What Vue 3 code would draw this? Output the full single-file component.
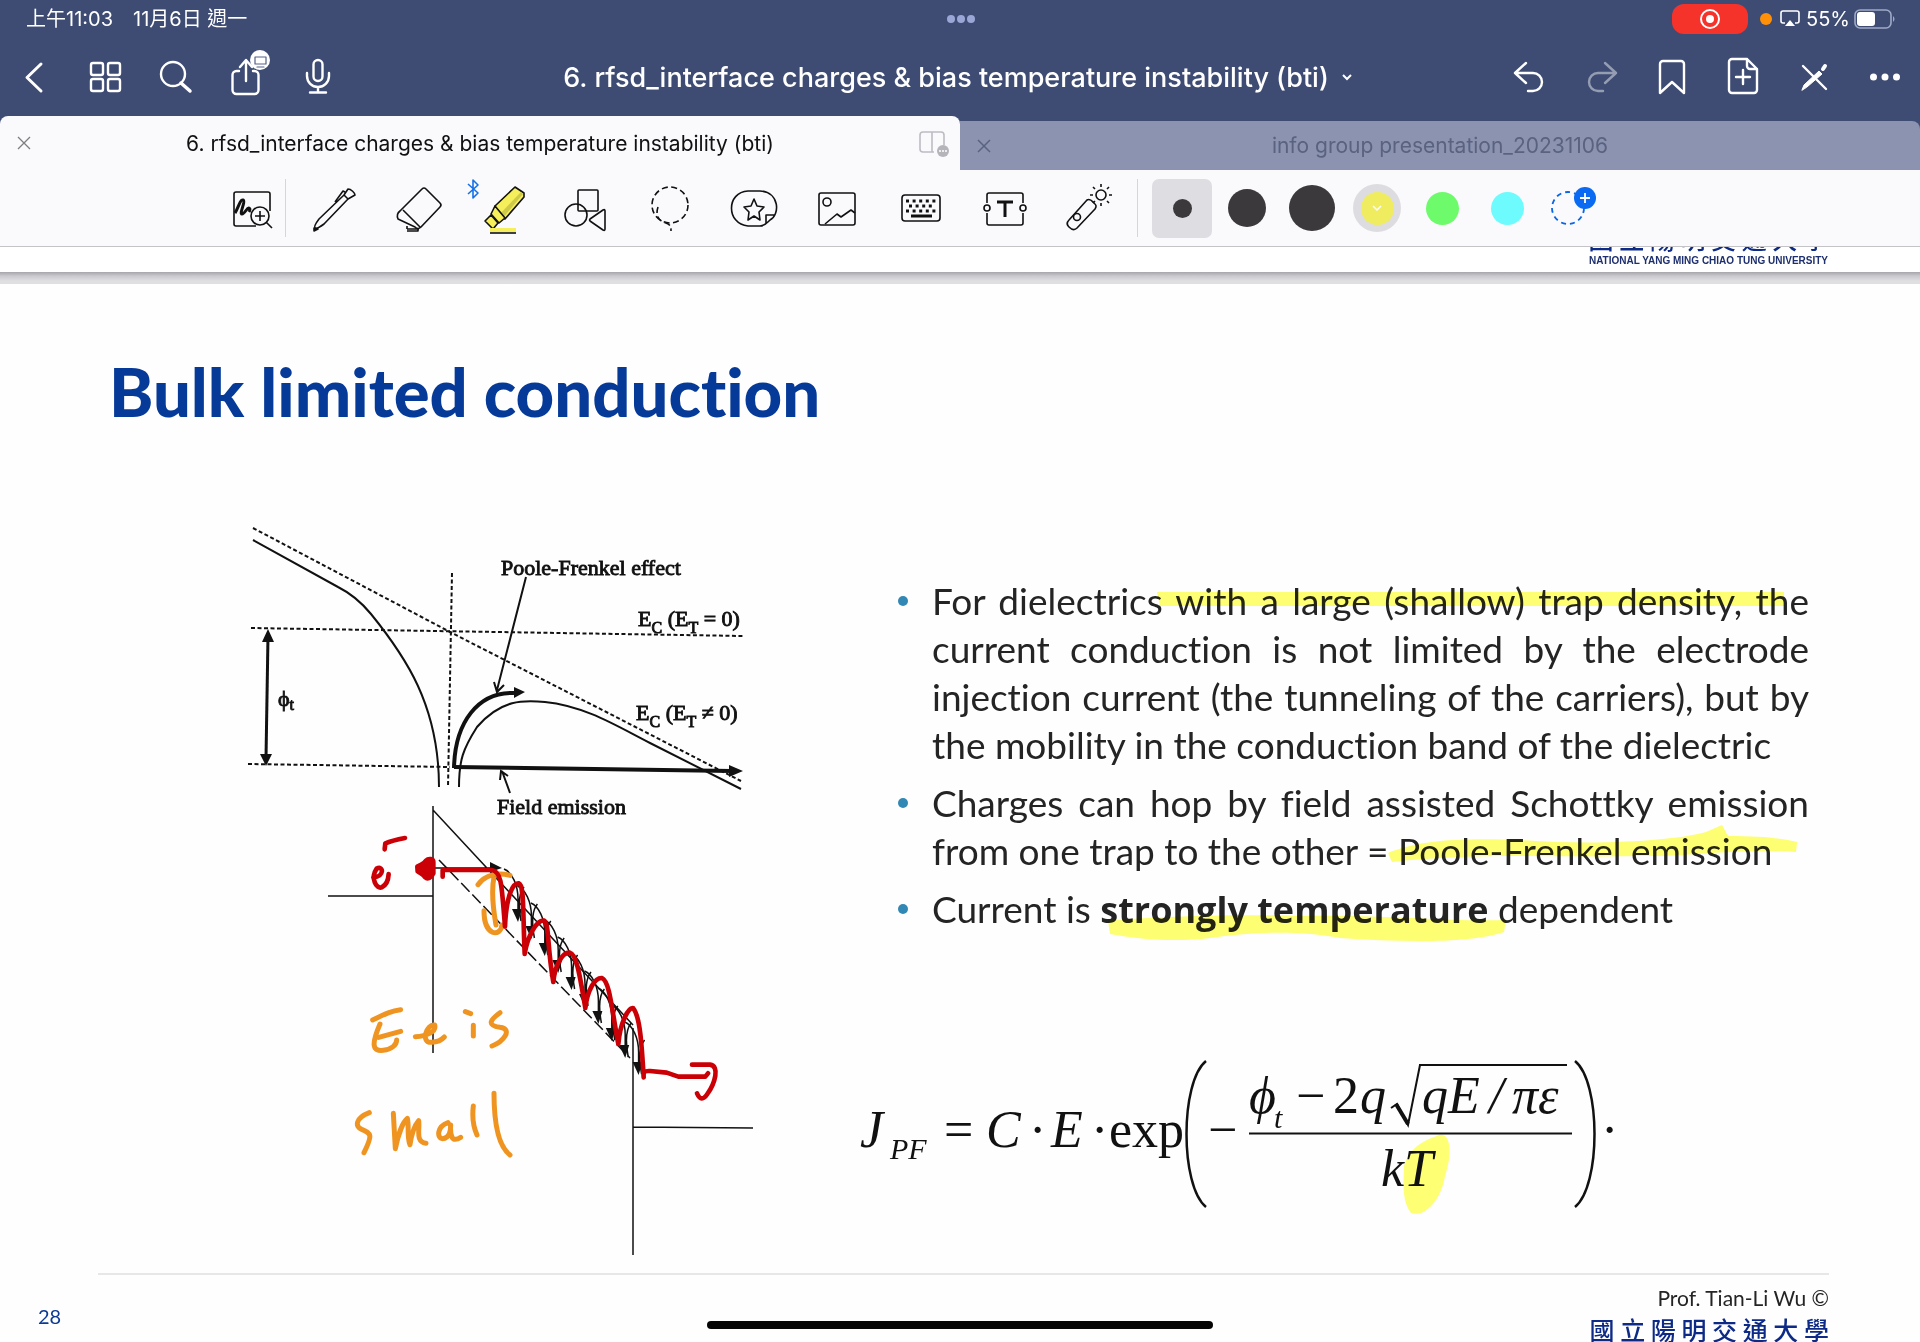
<script setup>
const hops = Array.from({ length: 10 }, (_, i) => {
  const x = 504 + i * 13.4
  const y = 869 + i * 17
  return {
    arc: `M${x} ${y}C${x + 8} ${y + 3} ${x + 14} ${y + 16} ${x + 14} ${y + 30}V${y + 46}M${x + 17} ${y + 52}C${x + 14} ${y + 36} ${x + 15} ${y + 24} ${x + 20} ${y + 18}`,
    head: `M${x + 8} ${y + 40}h10l-4 13z`,
  }
})
</script>

<template>
  <div class="app">
    <header class="chrome">
      <div class="status">
        <div class="when"><span>上午11:03</span><span>11月6日 週一</span></div>
        <svg class="multitask" width="28" height="10" viewBox="0 0 28 10" fill="#9aa7d6"><circle cx="4" cy="5" r="4" /><circle cx="14" cy="5" r="4" /><circle cx="24" cy="5" r="4" /></svg>
        <div class="indicators">
          <span class="record">
            <svg width="22" height="22" viewBox="0 0 22 22" fill="none" stroke="#fff" stroke-width="2"><circle cx="11" cy="11" r="9" /><circle cx="11" cy="11" r="4" fill="#fff" stroke="none" /></svg>
          </span>
          <span class="mic-dot"></span>
          <svg class="airplay" width="20" height="18" viewBox="0 0 20 18" fill="none" stroke="#fff" stroke-width="1.6"><path d="M5 13H3a2 2 0 0 1-2-2V3a2 2 0 0 1 2-2h14a2 2 0 0 1 2 2v8a2 2 0 0 1-2 2h-2" /><path d="M10 10l5 6H5z" fill="#fff" stroke="none" /></svg>
          <span class="percent">55%</span>
          <svg width="42" height="20" viewBox="0 0 42 20"><rect x="1" y="1" width="36" height="18" rx="5" fill="none" stroke="#a0a9c6" stroke-width="1.6" /><rect x="3" y="3" width="18" height="14" rx="3" fill="#fff" /><path d="M39 7q3 3 0 6z" fill="#a0a9c6" /></svg>
        </div>
      </div>
      <nav class="navbar">
        <div class="nav-group left">
          <button class="nav-btn" aria-label="Back"><svg viewBox="0 0 48 48"><path d="M32 11 18 24.500l14 13.500" stroke-width="3" /></svg></button>
          <button class="nav-btn" aria-label="Thumbnails"><svg viewBox="0 0 48 48"><rect x="11" y="10" width="12" height="12" rx="2" /><rect x="28" y="10" width="12" height="12" rx="2" /><rect x="11" y="26" width="12" height="12" rx="2" /><rect x="28" y="26" width="12" height="12" rx="2" /></svg></button>
          <button class="nav-btn" aria-label="Search"><svg viewBox="0 0 48 48"><circle cx="22" cy="21" r="12" /><path d="m30 30 9 8" stroke-width="3.500" /></svg></button>
          <button class="nav-btn" aria-label="Share"><svg viewBox="0 0 48 48"><path d="M17 18h-2.500a4 4 0 0 0-4 4v15a4 4 0 0 0 4 4h18a4 4 0 0 0 4-4V22a4 4 0 0 0-4-4H31M24 28V8M18 14l6-7 6 7" /><circle cx="38" cy="7" r="10" fill="#fff" stroke="none" /><path d="M33 4h11v7H33zM35 14h7" stroke="#56608a" stroke-width="1.200" /></svg></button>
          <button class="nav-btn" aria-label="Record audio"><svg viewBox="0 0 48 48"><rect x="20.500" y="7" width="9" height="21" rx="4.500" /><path d="M14 20v3a11 11 0 0 0 22 0v-3M25 34v5M17 39.500h16" /></svg></button>
        </div>
        <button class="doc-title">6. rfsd_interface charges &amp; bias temperature instability (bti)<svg width="12" height="8" viewBox="0 0 12 8"><path d="m2 2 4 4 4-4" fill="none" stroke="#fff" stroke-width="2" /></svg></button>
        <div class="nav-group right">
          <button class="nav-btn" aria-label="Undo"><svg viewBox="0 0 48 48"><path d="M20 10 9 20l11 10M9 20h18a9 9 0 0 1 0 18h-5" /></svg></button>
          <button class="nav-btn dim" aria-label="Redo"><svg viewBox="0 0 48 48"><path d="m28 10 11 10-11 10M39 20H21a9 9 0 0 0 0 18h5" /></svg></button>
          <button class="nav-btn" aria-label="Bookmark"><svg viewBox="0 0 48 48"><path d="M12 11a3 3 0 0 1 3-3h18a3 3 0 0 1 3 3v29l-12-11-12 11z" /></svg></button>
          <button class="nav-btn" aria-label="Add page"><svg viewBox="0 0 48 48"><path d="M13 6h15l10 10v21a3 3 0 0 1-3 3H13a3 3 0 0 1-3-3V9a3 3 0 0 1 3-3zM28 6v7a3 3 0 0 0 3 3h7M24 17v14M17 24h14" /></svg></button>
          <button class="nav-btn" aria-label="Stop editing"><svg viewBox="0 0 48 48"><path d="m13 13 23 23" /><path d="m12 37 2-5 15-14 3 3-15 13z" fill="#fff" stroke-width="1" /><path d="m33 16 2-3" stroke-width="4" /></svg></button>
          <button class="nav-btn" aria-label="More"><svg viewBox="0 0 48 48"><g fill="#fff" stroke="none"><circle cx="12.500" cy="24" r="3.500" /><circle cx="24" cy="24" r="3.500" /><circle cx="35.500" cy="24" r="3.500" /></g></svg></button>
        </div>
      </nav>
      <div class="tabs">
        <div class="tab active">
          <button class="close" aria-label="Close tab"><svg width="14" height="14" viewBox="0 0 14 14"><path d="m1 1 12 12M13 1 1 13" stroke="#7d7d82" stroke-width="1.300" /></svg></button>
          <a class="tab-name" href="#">6. rfsd_interface charges &amp; bias temperature instability (bti)</a>
          <svg class="split" width="32" height="28" viewBox="0 0 32 28" fill="none" stroke="#bcbcc2" stroke-width="1.600"><path d="M16 22H5a3 3 0 0 1-3-3V5a3 3 0 0 1 3-3h18a3 3 0 0 1 3 3v10M14 2v20" /><circle cx="25" cy="21" r="6" fill="#b4b4ba" stroke="none" /><path d="M21 21h2m1 0h2m1 0h2" stroke="#fff" /></svg>
        </div>
        <div class="tab idle">
          <button class="close" aria-label="Close tab"><svg width="14" height="14" viewBox="0 0 14 14"><path d="m1 1 12 12M13 1 1 13" stroke="#59627f" stroke-width="1.500" /></svg></button>
          <a class="tab-name" href="#">info group presentation_20231106</a>
        </div>
      </div>
    </header>

    <div class="toolbar">
      <div class="tools">
        <button class="tool" aria-label="Zoom window"><svg viewBox="0 0 52 52"><path d="M44 29V12a2 2 0 0 0-2-2H10a2 2 0 0 0-2 2v30a2 2 0 0 0 2 2h20" /><path d="M9 31c3-4 5-14 8-13s-4 14-1 14 5-7 7-6 0 4 0 4" stroke-width="3" /><circle cx="34" cy="34" r="9" fill="#faf9fc" /><path d="M34 29v10M29 34h10M40 40l6 6" /></svg></button>
        <button class="tool" aria-label="Pen"><svg viewBox="0 0 52 52"><path d="M35 13 10 37c-3 4-5 8-4 9s5-1 9-4l24-25M35 13l4 4M35 13l4-6c3 0 7 4 7 6l-7 4M36 10l-2-1-8 11" /><path d="m5 46 4 1-4 2z" fill="#111" /></svg></button>
        <button class="tool" aria-label="Eraser"><svg viewBox="0 0 52 52"><path d="M29 7q2-2 4 0l14 14q2 2 0 4L28 45q-3 3-6 0L5 37q-2-5 2-8zM10 28l17 17M14 47h12M14 44v3M25 46v3H14" /></svg></button>
        <button class="tool highlighter" aria-label="Highlighter">
          <svg viewBox="0 0 52 52"><path d="m38 5 9 6v4L28 37l-12-3 2-10z" fill="#f4ef5a" /><path d="M46 12 26 36l-6-1 24-25z" fill="#cfc94a" stroke="none" /><path d="m18 24-4 8 8 9 6-5-10-12zM8 39l6-6 7 8-5 6z" fill="#f4ef5a" /><path d="M13 48h26" stroke="#f4ef5a" stroke-width="4" /><path d="M13 51h26" /></svg>
          <svg class="bluetooth" width="12" height="22" viewBox="0 0 12 22" fill="none" stroke="#1471e6" stroke-width="1.800"><path d="m1 6 10 9-5 5V2l5 5-10 9" /></svg>
        </button>
        <button class="tool" aria-label="Shapes"><svg viewBox="0 0 52 52"><rect x="18" y="8" width="20" height="21" rx="1" /><circle cx="16" cy="33" r="11" /><path d="M30 39q-1-1 0-2l13-9q2-1 2 1v18q0 2-2 1z" /></svg></button>
        <button class="tool" aria-label="Lasso"><svg viewBox="0 0 52 52"><g stroke-dasharray="6 3.500"><circle cx="26" cy="23" r="18" /><path d="M14 25c-3 9 1 14 8 16 5 2 5 4 5 8" /></g></svg></button>
        <button class="tool" aria-label="Stickers"><svg viewBox="0 0 52 52"><path d="M20 9h12c20 1 20 24 10 29-3 3-5 6-10 6H20C-2 42-2 10 20 9zM38 42v-9h9" /><path d="m26 17 3 7 7 1-5 5 1 8-6-4-6 4 1-8-5-5 7-1z" /></svg></button>
        <button class="tool" aria-label="Image"><svg viewBox="0 0 52 52"><rect x="8" y="11" width="36" height="32" rx="2" /><circle cx="16" cy="20" r="4" /><path d="m14 42 12-10 4 3 10-7 4 3" /></svg></button>
        <button class="tool" aria-label="Keyboard"><svg viewBox="0 0 52 52"><rect x="7" y="13" width="38" height="26" rx="3" /><path d="M11 19h30M11 29h30" stroke-width="3" stroke-dasharray="3 3.600" /><path d="M14 24h25" stroke-width="3" stroke-dasharray="3 3.600" /><path d="M16 34h21" stroke-width="3" /></svg></button>
        <button class="tool" aria-label="Text"><svg viewBox="0 0 52 52"><path d="M8 21v-8a2 2 0 0 1 2-2h32a2 2 0 0 1 2 2v8M8 31v10a2 2 0 0 0 2 2h32a2 2 0 0 0 2-2V31" /><circle cx="8" cy="26" r="3" /><circle cx="44" cy="26" r="3" /><path d="M18 20h16M26 19v16" stroke-width="3" /></svg></button>
        <button class="tool" aria-label="Laser pointer"><svg viewBox="0 0 52 52"><path d="m25 18-18 20c-3 3-2 5 0 7s5 4 8 1l18-19c2-3 1-4-1-6s-4-5-7-3z" /><circle cx="15" cy="35" r="3.500" /><circle cx="39" cy="13" r="5" /><path d="M39 5V2M39 24v-3M31 13h-3M50 13h-3M33 7l-2-2M45 19l2 2M45 7l2-2M33 19l-2 2" /></svg></button>
      </div>
      <div class="options">
        <button class="size chosen" aria-label="Thin"><span class="dot thin"></span></button>
        <button class="size" aria-label="Medium"><span class="dot medium"></span></button>
        <button class="size" aria-label="Thick"><span class="dot thick"></span></button>
        <button class="size" aria-label="Yellow"><span class="ring"><span class="dot yellow"><svg width="12" height="8" viewBox="0 0 12 8"><path d="m2 2 4 4 4-4" fill="none" stroke="#fff" stroke-width="1.500" /></svg></span></span></button>
        <button class="size" aria-label="Green"><span class="dot green"></span></button>
        <button class="size" aria-label="Cyan"><span class="dot cyan"></span></button>
        <button class="size" aria-label="Add colour"><svg width="52" height="52" viewBox="0 0 52 52" fill="none" stroke="#0a66e8" stroke-width="1.800"><circle cx="22" cy="26" r="16" stroke-dasharray="5 4" /><circle cx="39" cy="16" r="11" fill="#0a6af2" stroke="none" /><path d="M39 11v10M34 16h10" stroke="#fff" /></svg></button>
      </div>
    </div>

    <section class="prev-page">
      <p class="uni">國 立 陽 明 交 通 大 學</p>
      <p class="uni-en">NATIONAL YANG MING CHIAO TUNG UNIVERSITY</p>
    </section>
    <div class="page-gap"></div>

    <main class="slide">
      <h1>Bulk limited conduction</h1>
      <div class="columns">
        <svg class="figure" width="540" height="750" viewBox="240 510 540 750" fill="none" stroke="#111" stroke-width="2">
          <g stroke-dasharray="4 2.500">
            <path d="M253 528 450 632 741 781" />
            <path d="M251 628 743 636" />
            <path d="M248 764 450 767" />
            <path d="M452 573 448 787" />
          </g>
          <path d="M253 540 338 587C352 594 362 603 371 614 405 656 439 705 439 787" />
          <path d="M459 787C459 760 463 749 477 727 501 699 524 700 545 702 586 706 620 728 650 743L741 789" />
          <path d="M454 768C455 722 478 692 514 693" stroke-width="4" />
          <path d="M454 767 732 771" stroke-width="4" />
          <path d="M268 636 266 758" stroke-width="3" />
          <path d="m514 687 11 5-11 6zM729 765l14 6-14 6zM262 642l6-13 6 13zM260 754l6 12 6-12z" fill="#111" stroke="none" />
          <path d="M526 577 497 690M494 682l3 10 7-7M510 793 502 771M500 780l1-9 7 5" />
          <g class="fig-text">
            <text x="501" y="575">Poole-Frenkel effect</text>
            <text x="638" y="626">E<tspan class="sub" dy="7">C</tspan><tspan dy="-7"> (E</tspan><tspan class="sub" dy="7">T</tspan><tspan dy="-7"> = 0)</tspan></text>
            <text x="636" y="720">E<tspan class="sub" dy="7">C</tspan><tspan dy="-7"> (E</tspan><tspan class="sub" dy="7">T</tspan><tspan dy="-7"> ≠ 0)</tspan></text>
            <text x="278" y="706">ϕ<tspan class="sub" dy="4">t</tspan></text>
            <text x="497" y="814">Field emission</text>
          </g>
          <g stroke-width="1.500">
            <path d="M433 806V1053M328 896H433M433 810 633 1025M433 868H496M633 1028V1255M633 1127 753 1128" />
            <path d="M439 860 630 1058" stroke-dasharray="12 4" />
            <path v-for="(hop, i) in hops" :key="'a' + i" :d="hop.arc" />
          </g>
          <g fill="#111" stroke="none">
            <path v-for="(hop, i) in hops" :key="'h' + i" :d="hop.head" />
            <path d="m490 862 12 6-12 4z" />
          </g>
          <svg x="300" y="790" width="480" height="480" viewBox="0 0 1440 1440" stroke-linecap="round" stroke-linejoin="round">
            <g stroke="#ef9420" stroke-width="15">
              <path d="M534 284C555 255 590 246 630 256M582 260C574 300 580 360 588 405M552 362C552 440 602 442 606 405" />
              <path d="M302 659C275 662 255 672 218 690M240 702C215 760 215 785 250 781 275 778 290 765 290 750M236 742 302 724" />
              <path d="M346 740C380 738 410 725 404 705 380 700 360 760 395 757 415 756 425 750 433 741M496 665l16 6M520 706v32M600 668C570 690 560 705 600 712 640 718 610 755 576 768" />
              <path d="M208 968C165 985 165 1010 185 1018 215 1030 218 1035 192 1088M280 970 286 1076C295 1030 310 995 322 985 328 1010 320 1040 330 1064 335 1030 345 1005 356 992 360 1020 345 1055 378 1060M444 998C410 1010 410 1045 428 1046 450 1046 452 1015 452 1005 450 1035 455 1060 482 1042M520 948C516 980 520 1010 531 1035M582 910C582 980 590 1065 630 1095" />
            </g>
            <g stroke="#cb0006" stroke-width="14">
              <path d="M254 178 256 160C275 152 295 148 315 144M220 262C255 260 250 225 230 236 210 265 230 298 245 292 260 285 265 270 266 252" />
              <path d="M352 230C362 222 372 224 378 212 386 204 400 206 400 216V250C394 264 382 268 376 262 368 250 360 250 353 244z" fill="#cb0006" />
              <path d="M428 260v-20H575C605 244 605 285 615 410 618 330 635 278 656 280 672 285 668 340 674 492 682 440 710 388 732 392 748 400 740 460 760 576 764 530 785 486 810 488 830 492 840 560 856 654 862 600 885 562 906 564 930 575 935 660 955 762 960 700 985 650 1000 655 1020 680 1025 760 1031 862 1030 845 1032 842 1050 843L1100 848 1135 860H1216L1224 850" />
              <path d="M1176 824H1230C1260 828 1245 880 1222 912 1210 930 1200 930 1191 910" />
            </g>
          </svg>
        </svg>

        <div class="notes">
          <ul>
            <li>
              <span class="line full">For dielectrics with a large (shallow) trap density, the</span>
              <span class="line full">current conduction is not limited by the electrode</span>
              <span class="line full">injection current (the tunneling of the carriers), but by</span>
              <span class="line">the mobility in the conduction band of the dielectric</span>
            </li>
            <li>
              <span class="line full">Charges can hop by field assisted Schottky emission</span>
              <span class="line">from one trap to the other = Poole-Frenkel emission</span>
            </li>
            <li><span class="line">Current is <strong>strongly temperature</strong> dependent</span></li>
          </ul>
          <svg class="marker" width="930" height="380" viewBox="890 579 930 380" fill="#feff72" aria-hidden="true">
            <path d="M1157 592H1784V606H1160z" />
            <path d="M1388 853C1420 840 1460 838 1520 840 1600 846 1680 840 1706 832L1722 825 1728 836C1760 836 1780 838 1797 842L1796 852C1740 848 1700 856 1640 856 1560 858 1480 852 1392 862z" />
            <path d="M1108 921C1160 916 1240 914 1300 916 1380 914 1450 922 1506 920L1504 932C1470 944 1400 942 1340 938 1300 930 1250 932 1210 938 1180 942 1140 940 1110 934z" />
          </svg>
          <svg class="formula" width="780" height="170" viewBox="850 1050 780 170" fill="none" stroke="#111" stroke-width="2">
            <path d="M1438 1135C1452 1132 1450 1160 1444 1176 1440 1200 1424 1218 1410 1213 1400 1200 1403 1180 1403 1166 1410 1145 1425 1140 1438 1135z" fill="#feff72" stroke="none" />
            <g class="math">
              <text x="859" y="1147">J</text><text class="small" x="889" y="1159">PF</text>
              <text class="up" x="943" y="1147">=</text><text x="985" y="1147">C</text>
              <text class="up" x="1028" y="1147">·</text><text x="1050" y="1147">E</text><text class="up" x="1090" y="1147">·</text>
              <text class="up" x="1108" y="1147">exp</text><text class="up" x="1207" y="1147">−</text>
              <text x="1248" y="1113">ϕ</text><text class="small" x="1273" y="1128">t</text><text class="up" x="1295" y="1113">−</text>
              <text class="up" x="1332" y="1113">2</text><text x="1359" y="1113">q</text>
              <text x="1421" y="1113">q</text><text x="1447" y="1113">E</text><text x="1488" y="1113">/</text><text x="1511" y="1113">πε</text>
              <text x="1380" y="1186">k</text><text x="1403" y="1186">T</text>
              <text class="up" x="1600" y="1147">·</text>
            </g>
            <path d="M1248 1133.500H1571M1418 1065H1566" />
            <path d="m1390 1108 6-4 11 21 12-60" />
            <path d="m1395 1104 12 20" stroke-width="4" />
            <path d="M1205 1061C1179 1082 1179 1186 1205 1207M1574 1061C1600 1082 1600 1186 1574 1207" stroke-width="2.500" />
          </svg>
        </div>
      </div>
      <footer>
        <span class="page-no">28</span>
        <div class="credit"><span>Prof. Tian-Li Wu ©</span><span class="uni">國 立 陽 明 交 通 大 學</span></div>
      </footer>
    </main>
    <div class="home-bar"></div>
  </div>
</template>

<style>
body { margin: 0; background: #fefefe; }
</style>

<style scoped>
.app { position: relative; min-height: 100vh; max-height: 100vh; overflow: hidden; display: flex; flex-direction: column; font-family: Inter, "Noto Sans CJK TC", sans-serif; background: #fefefe; color: #111; }
button { border: 0; background: none; padding: 0; margin: 0; font: inherit; color: inherit; display: flex; align-items: center; justify-content: center; }
a { color: inherit; text-decoration: none; }
p, ul, h1 { margin: 0; padding: 0; }

.chrome { background: #3e4c74; color: #fff; flex: none; }
.status { height: 38px; display: grid; grid-template-columns: 1fr auto 1fr; align-items: center; padding: 0 24px 0 26px; font-size: 20px; line-height: 24px; }
.when { display: flex; gap: 20px; white-space: nowrap; }
.indicators { display: flex; align-items: center; justify-content: flex-end; }
.record { width: 76px; height: 30px; border-radius: 12px; background: #f6332b; display: flex; align-items: center; justify-content: center; margin-right: 12px; }
.mic-dot { width: 12px; height: 12px; border-radius: 50%; background: #ff9008; margin-right: 8px; }
.airplay { margin-right: 6px; }
.percent { margin-right: 4px; }

.navbar { height: 78px; display: grid; grid-template-columns: 1fr auto 1fr; align-items: center; }
.nav-group { display: flex; gap: 23px; }
.nav-group.left { padding-left: 9px; }
.nav-group.right { justify-content: flex-end; padding-right: 11px; }
.nav-btn { width: 48px; height: 48px; }
.nav-btn svg { width: 48px; height: 48px; fill: none; stroke: #fff; stroke-width: 2.4; stroke-linecap: round; stroke-linejoin: round; overflow: visible; }
.nav-btn.dim { opacity: .45; }
.doc-title { font-size: 27px; font-weight: 500; gap: 12px; white-space: nowrap; padding-right: 4px; }

.tabs { display: flex; align-items: flex-end; }
.tab { flex: 1; display: flex; align-items: center; justify-content: center; font-size: 21px; position: relative; }
.tab.active { height: 54px; background: #faf9fc; color: #111; border-radius: 8px 8px 0 0; }
.tab.idle { height: 49px; background: #8b93b1; color: #59627f; border-radius: 0 8px 0 0; }
.close { position: absolute; left: 17px; top: 0; bottom: 0; }
.split { position: absolute; right: 10px; top: 14px; }

.toolbar { height: 76px; flex: none; display: flex; align-items: center; background: #faf9fc; border-bottom: 1px solid #c4c4c8; padding-left: 210px; }
.tools { width: 920px; display: flex; position: relative; }
.tool { flex: 1; height: 58px; position: relative; }
.tool:first-child::after { content: ""; position: absolute; right: 8px; top: 0; width: 1px; height: 58px; background: #d5d5da; }
.tool svg { width: 52px; height: 52px; fill: none; stroke: #111; stroke-width: 1.6; stroke-linejoin: round; overflow: visible; }
.tool .bluetooth { position: absolute; left: 6px; top: -1px; width: 12px; height: 22px; stroke: #1471e6; }
.options { display: flex; align-items: center; gap: 5px; margin-left: 7px; padding-left: 14px; border-left: 1px solid #d5d5da; height: 58px; }
.size { width: 60px; height: 59px; border-radius: 7px; }
.size.chosen { background: #dedde1; }
.dot { border-radius: 50%; background: #3b393c; display: flex; align-items: center; justify-content: center; }
.thin { width: 19px; height: 19px; }
.medium { width: 38px; height: 38px; }
.thick { width: 46px; height: 46px; }
.ring { width: 48px; height: 48px; border-radius: 50%; background: #dddce0; display: flex; align-items: center; justify-content: center; }
.yellow { width: 33px; height: 33px; background: #efec60; }
.green { width: 33px; height: 33px; background: #6dfb6b; }
.cyan { width: 33px; height: 33px; background: #6dfbfd; }

.prev-page { height: 25px; display: flex; flex-direction: column; justify-content: flex-end; align-items: flex-end; padding-right: 92px; overflow: hidden; background: #fff; flex: none; }
.page-gap { height: 12px; flex: none; background: linear-gradient(#a6a6aa, #cac9cd 4px, #dfdee1 9px); }
.uni { font-family: "Noto Sans CJK TC", sans-serif; font-weight: 500; font-size: 25px; line-height: 26px; color: #0d2a86; white-space: nowrap; }
.uni-en { font-family: "Liberation Sans", sans-serif; font-weight: 700; font-size: 10px; line-height: 20px; margin-bottom: 1px; color: #1d2f6e; }

.slide { flex: 1; display: flex; flex-direction: column; font-family: Lato, "Noto Sans CJK TC", sans-serif; font-variant-ligatures: none; color: #242424; }
h1 { font-size: 67px; line-height: 76px; font-weight: 900; color: #063a98; padding: 69px 0 0 109px; }
.columns { display: flex; justify-content: space-between; padding: 81px 111px 0 240px; }
.figure { flex: none; }
.fig-text { font: 22px "Liberation Serif", serif; fill: #111; stroke: #111; stroke-width: .9px; }
.sub { font-size: 16px; }
.notes { position: relative; flex: none; width: 958px; padding-top: 67px; }
ul { list-style: none; font-size: 37px; line-height: 48px; }
li { position: relative; padding-left: 81px; margin-bottom: 10px; }
li::before { content: ""; position: absolute; left: 47px; top: 19px; width: 10px; height: 10px; border-radius: 50%; background: #3288b4; }
.line { display: block; white-space: nowrap; }
.line.full { white-space: normal; text-align-last: justify; }
strong { font-family: "Open Sans", sans-serif; font-size: 36px; line-height: 24px; font-weight: 700; }
.marker { position: absolute; left: 39px; top: 69px; mix-blend-mode: multiply; }
.formula { display: block; margin-top: 117px; }
.math { font: italic 52px "Liberation Serif", serif; fill: #111; stroke: none; }
.up { font-style: normal; }
.small { font-size: 30px; }

footer { flex: none; display: flex; justify-content: space-between; margin: 13px 91px 0 98px; border-top: 2px solid #e7e7e8; font-size: 21px; line-height: 26px; }
.page-no { color: #0d3a94; margin: 28px 0 0 -60px; font-size: 20px; }
.credit { display: flex; flex-direction: column; align-items: flex-end; padding-top: 10px; gap: 5px; }
.home-bar { position: absolute; bottom: 13px; left: calc(50% - 253px); width: 506px; height: 8px; border-radius: 4px; background: #050505; }
</style>
